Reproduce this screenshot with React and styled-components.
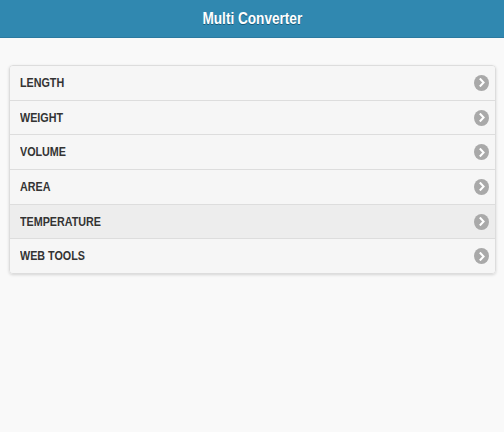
import React from "react";
import styled, { createGlobalStyle } from "styled-components";

const GlobalStyle = createGlobalStyle`
  html, body {
    margin: 0;
    padding: 0;
    background: #f9f9f9;
    font-family: "Liberation Sans", Arial, sans-serif;
  }
`;

const Page = styled.div`
  min-height: 432px;
  background: #f9f9f9;
`;

const Header = styled.header`
  height: 37px;
  background: #3088b0;
  border-bottom: 1px solid #2b7aa0;
  display: flex;
  align-items: center;
  justify-content: center;
`;

/* the app font is a narrow grotesque, squeeze Liberation Sans to fit */
const Title = styled.h1`
  margin: 0;
  font-size: 17px;
  font-weight: bold;
  color: #fff;
  text-shadow: 0 1px 0 #155a7a;
  transform: scaleX(0.8);
`;

const Content = styled.main`
  padding: 27px 8px 0 9px;
`;

const List = styled.ul`
  list-style: none;
  margin: 0;
  padding: 0;
  border: 1px solid #dddddd;
  border-radius: 4px;
  box-shadow: 0 1px 3px rgba(0, 0, 0, 0.15);
  overflow: hidden;
`;

const Row = styled.li`
  height: 33.7px;
  display: flex;
  align-items: center;
  justify-content: space-between;
  padding: 0 6px 0 10px;
  background: ${({ active }) => (active ? "#ededed" : "#f6f6f6")};
  border-top: 1px solid #dddddd;
  &:first-child {
    border-top: none;
  }
`;

const Label = styled.span`
  font-size: 12.5px;
  font-weight: bold;
  color: #333;
  text-shadow: 0 1px 0 #f3f3f3;
  transform: scaleX(0.86);
  transform-origin: left center;
`;

const Arrow = styled.span`
  width: 15px;
  height: 16px;
  border-radius: 50%;
  background: #a9a9a9;
  display: flex;
  align-items: center;
  justify-content: center;
`;

const Chevron = () => (
  <svg width="8" height="9" viewBox="0 0 8 9">
    <path
      d="M2.5 1.2 L5.6 4.5 L2.5 7.8"
      fill="none"
      stroke="#fff"
      strokeWidth="2"
      strokeLinecap="square"
    />
  </svg>
);

const items = ["LENGTH", "WEIGHT", "VOLUME", "AREA", "TEMPERATURE", "WEB TOOLS"];

export default function App() {
  return (
    <Page>
      <GlobalStyle />
      <Header>
        <Title>Multi Converter</Title>
      </Header>
      <Content>
        <List>
          {items.map((name) => (
            <Row key={name} active={name === "TEMPERATURE"}>
              <Label>{name}</Label>
              <Arrow>
                <Chevron />
              </Arrow>
            </Row>
          ))}
        </List>
      </Content>
    </Page>
  );
}
